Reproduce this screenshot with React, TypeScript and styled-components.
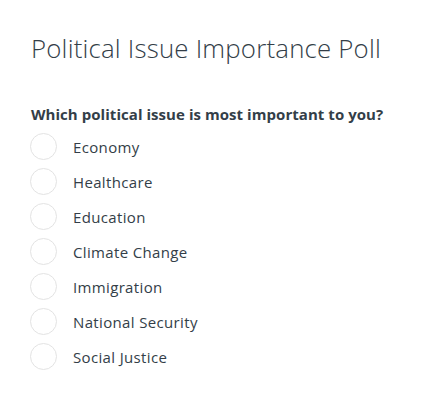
import React from "react";
import styled, { createGlobalStyle } from "styled-components";

const Global = createGlobalStyle`
  html, body { margin: 0; padding: 0; background: #ffffff; }
  body { font-family: "Open Sans", "Noto Sans", Arial, sans-serif; color: #333e48; }
`;

const Page = styled.div`
  padding: 29px 0 0 31px;
  display: flex;
  flex-direction: column;
`;

const Title = styled.h1`
  margin: 0;
  font-size: 25.8px;
  font-weight: 300;
  line-height: 38px;
  color: #333e48;
  letter-spacing: 0.2px;
`;

const Question = styled.h2`
  margin: 36px 0 0 0;
  font-size: 15px;
  font-weight: 700;
  line-height: 22px;
  color: #333e48;
  letter-spacing: 0.05px;
`;

const Options = styled.div`
  display: flex;
  flex-direction: column;
  margin-top: 4px;
`;

const Option = styled.label`
  display: flex;
  align-items: center;
  height: 35px;
  gap: 16px;
  cursor: pointer;
`;

const Circle = styled.span`
  width: 27px;
  height: 27px;
  border-radius: 50%;
  border: 1px solid #e3e3e3;
  box-sizing: border-box;
  margin-left: -1px;
`;

const OptionText = styled.span`
  font-size: 15px;
  color: #333e48;
  letter-spacing: 0.35px;
`;

const options = [
  "Economy",
  "Healthcare",
  "Education",
  "Climate Change",
  "Immigration",
  "National Security",
  "Social Justice",
];

export default function App() {
  return (
    <>
      <Global />
      <Page>
        <Title>Political Issue Importance Poll</Title>
        <Question>Which political issue is most important to you?</Question>
        <Options>
          {options.map((o) => (
            <Option key={o}>
              <Circle />
              <OptionText>{o}</OptionText>
            </Option>
          ))}
        </Options>
      </Page>
    </>
  );
}
